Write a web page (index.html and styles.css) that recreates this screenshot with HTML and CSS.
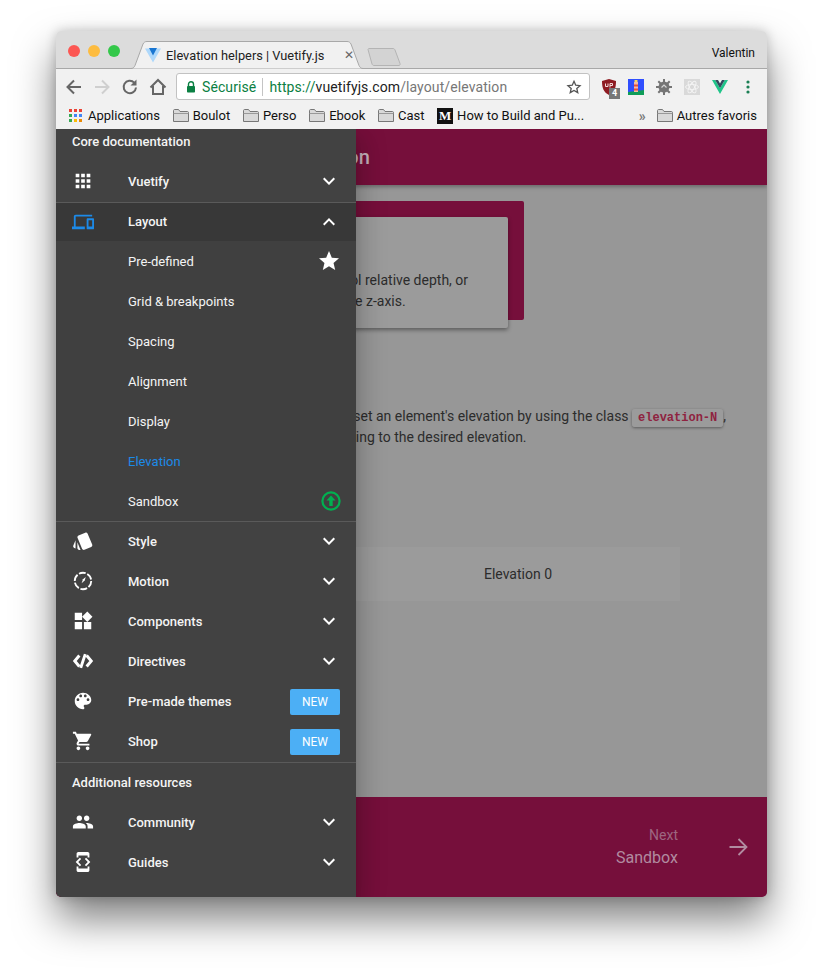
FILE: index.html
```html
<!DOCTYPE html>
<html lang="en">
<head>
  <meta charset="UTF-8">
  <title>Elevation helpers | Vuetify.js</title>
  <link rel="stylesheet" href="styles.css">
</head>
<body>
  <div class="window">
    <!-- browser chrome -->
    <div class="titlebar">
      <div class="lights">
        <span class="light red"></span>
        <span class="light yellow"></span>
        <span class="light green"></span>
      </div>
      <div class="tab">
        <svg class="tab-shape" width="238" height="28" viewBox="0 0 238 28"><path d="M0.5 27.5H3C5 27.5 6 26.5 7 24.500L15 3C16 1.300 17 0.500 19 0.500H219C221 0.500 222 1.300 223 3L231 24.500C232 26.500 233 27.500 235 27.500H238" fill="#f1f1f1" stroke="#a8a8a8"/></svg>
        <svg class="tab-logo" width="16" height="16" viewBox="0 0 16 16"><path d="M0 1.500H6L8 6 10 1.500H16L8 15.500Z" fill="#aed8fb"/><path d="M4 1H12L8 8.500Z" fill="#1976d2"/></svg>
        <span class="tab-title">Elevation helpers | Vuetify.js</span>
        <span class="tab-close">✕</span>
      </div>
      <svg class="new-tab" width="34" height="18" viewBox="0 0 34 18"><path d="M1 1.500C1 1 1.500 .5 2 .5H26C27 .5 27.500 1 28 2L33 15.500C33.300 16.500 33 17.500 32 17.500H7C6 17.500 5.500 17 5 16Z" fill="#d3d3d3" stroke="#b4b4b4"/></svg>
      <span class="profile">Valentin</span>
    </div>

    <div class="toolbar">
      <svg class="nav-icon" width="20" height="20" viewBox="0 0 20 20"><path d="M17 10H4M10 3.500L3.500 10 10 16.500" fill="none" stroke="#666" stroke-width="2"/></svg>
      <svg class="nav-icon" width="20" height="20" viewBox="0 0 20 20"><path d="M3 10H16M10 3.500L16.500 10 10 16.500" fill="none" stroke="#cfcfcf" stroke-width="2"/></svg>
      <svg class="nav-icon" width="20" height="20" viewBox="0 0 20 20"><path d="M16 10.500A6.200 6.200 0 1 1 14.200 5.600" fill="none" stroke="#666" stroke-width="2"/><path d="M16.500 2.500V8.500H10.500Z" fill="#666"/></svg>
      <svg class="nav-icon" width="20" height="20" viewBox="0 0 20 20"><path d="M2.500 10.500L10 3 17.500 10.500M5 9V17H15V9" fill="none" stroke="#666" stroke-width="2"/></svg>
      <div class="omnibox">
        <svg class="lock" width="10" height="12" viewBox="0 0 10 12"><path d="M2.500 5V3.200a2.500 2.500 0 0 1 5 0V5" fill="none" stroke="#0b8043" stroke-width="1.400"/><rect x="1" y="5" width="8" height="6.500" rx=".8" fill="#0b8043"/></svg>
        <span class="secure">Sécurisé</span>
        <span class="url"><span class="scheme">https://</span><span class="host">vuetifyjs.com</span><span class="path">/layout/elevation</span></span>
        <svg class="omni-star" width="16" height="16" viewBox="0 0 24 24"><path d="M12 3.500l2.600 5.800 6.400.7-4.800 4.200 1.400 6.300-5.600-3.200-5.600 3.200 1.400-6.300L3 10l6.400-.7z" fill="none" stroke="#555" stroke-width="2"/></svg>
      </div>
      <div class="extensions">
        <div class="ext ublock">
          <svg width="16" height="16" viewBox="0 0 16 16"><path d="M8 0L15 2C15 8 14 13 8 16 2 13 1 8 1 2Z" fill="#8e1b22"/><path d="M4.500 4.500V7.500H7V4.500M9 8.500V4.500H11.500V6.500H9" fill="none" stroke="#f3dcdc"/></svg>
          <span class="ext-count">4</span>
        </div>
        <svg class="ext" width="16" height="16" viewBox="0 0 16 16"><rect width="16" height="16" fill="#304ffe"/><path d="M0 13L16 11V16H0Z" fill="#0f9d58"/><rect x="6" y="3" width="4" height="10" fill="#f4b9a7"/><rect x="6" y="5.500" width="4" height="2" fill="#e8503a"/><rect x="6" y="9.500" width="4" height="2" fill="#e8503a"/><rect x="6.500" y="1" width="3" height="2" fill="#f9d65c"/></svg>
        <svg class="ext" width="16" height="16" viewBox="0 0 16 16"><circle cx="8" cy="8" r="5.500" fill="#757575"/><path d="M8 0V16M0 8H16M2.300 2.300L13.700 13.700M13.700 2.300L2.300 13.700" stroke="#757575" stroke-width="2"/><path d="M5.500 8.500L8 6 10.500 8.500" fill="none" stroke="#d5d5d5" stroke-width="1.200"/></svg>
        <svg class="ext" width="16" height="16" viewBox="0 0 16 16"><rect width="16" height="16" fill="#d9d9d9"/><g fill="none" stroke="#f4f4f4" stroke-width=".9"><ellipse cx="8" cy="8" rx="6.500" ry="2.500"/><ellipse cx="8" cy="8" rx="6.500" ry="2.500" transform="rotate(60 8 8)"/><ellipse cx="8" cy="8" rx="6.500" ry="2.500" transform="rotate(120 8 8)"/></g></svg>
        <svg class="ext" width="16" height="14" viewBox="0 0 16 14"><path d="M0 0H3.200L8 8.200 12.800 0H16L8 14Z" fill="#20c489"/><path d="M3.200 0H6L8 3.500 10 0H12.800L8 8.200Z" fill="#34495e"/></svg>
        <svg class="ext menu-dots" width="4" height="14" viewBox="0 0 4 14"><circle cx="2" cy="2" r="1.600" fill="#1b7f55"/><circle cx="2" cy="7" r="1.600" fill="#1b7f55"/><circle cx="2" cy="12" r="1.600" fill="#1b7f55"/></svg>
      </div>
    </div>

    <div class="bookmarks">
      <span class="bookmark">
        <svg class="apps-dots" width="13" height="13" viewBox="0 0 13 13"><g><rect width="3" height="3" fill="#ea4335"/><rect x="5" width="3" height="3" fill="#ea4335"/><rect x="10" width="3" height="3" fill="#ea4335"/><rect y="5" width="3" height="3" fill="#34a853"/><rect x="5" y="5" width="3" height="3" fill="#4285f4"/><rect x="10" y="5" width="3" height="3" fill="#4285f4"/><rect y="10" width="3" height="3" fill="#34a853"/><rect x="5" y="10" width="3" height="3" fill="#fbbc05"/><rect x="10" y="10" width="3" height="3" fill="#ea8a05"/></g></svg>
        Applications
      </span>
      <span class="bookmark"><svg class="folder" width="16" height="13" viewBox="0 0 16 13"><path d="M.5 12.500V1.500C.5 1 1 .5 1.500 .5H5.500L7 2.500H14.500C15 2.500 15.500 3 15.500 3.500V12.500Z" fill="#d9d9d9" stroke="#777"/><path d="M.5 4.500H15.500" stroke="#999"/></svg>Boulot</span>
      <span class="bookmark"><svg class="folder" width="16" height="13" viewBox="0 0 16 13"><path d="M.5 12.500V1.500C.5 1 1 .5 1.500 .5H5.500L7 2.500H14.500C15 2.500 15.500 3 15.500 3.500V12.500Z" fill="#d9d9d9" stroke="#777"/><path d="M.5 4.500H15.500" stroke="#999"/></svg>Perso</span>
      <span class="bookmark"><svg class="folder" width="16" height="13" viewBox="0 0 16 13"><path d="M.5 12.500V1.500C.5 1 1 .5 1.500 .5H5.500L7 2.500H14.500C15 2.500 15.500 3 15.500 3.500V12.500Z" fill="#d9d9d9" stroke="#777"/><path d="M.5 4.500H15.500" stroke="#999"/></svg>Ebook</span>
      <span class="bookmark"><svg class="folder" width="16" height="13" viewBox="0 0 16 13"><path d="M.5 12.500V1.500C.5 1 1 .5 1.500 .5H5.500L7 2.500H14.500C15 2.500 15.500 3 15.500 3.500V12.500Z" fill="#d9d9d9" stroke="#777"/><path d="M.5 4.500H15.500" stroke="#999"/></svg>Cast</span>
      <span class="bookmark"><span class="medium-logo">M</span>How to Build and Pu...</span>
      <span class="bookmark-more">»</span>
      <span class="bookmark"><svg class="folder" width="16" height="13" viewBox="0 0 16 13"><path d="M.5 12.500V1.500C.5 1 1 .5 1.500 .5H5.500L7 2.500H14.500C15 2.500 15.500 3 15.500 3.500V12.500Z" fill="#d9d9d9" stroke="#777"/><path d="M.5 4.500H15.500" stroke="#999"/></svg>Autres favoris</span>
    </div>

    <!-- page -->
    <div class="page">
      <header class="page-bar">Elevation</header>

      <main class="content">
        <div class="hero">
          <div class="hero-card">
            <p class="hero-line first">to control relative depth, or</p>
            <p class="hero-line second">surfaces along the z-axis.</p>
          </div>
        </div>
        <p class="usage-line first">You can set an element's elevation by using the class <code class="chip">elevation-N</code>,</p>
        <p class="usage-line second">corresponding to the desired elevation.</p>
        <div class="elevation-box">Elevation 0</div>
      </main>

      <footer class="page-foot">
        <div class="next">
          <span class="next-label">Next</span>
          <span class="next-title">Sandbox</span>
        </div>
        <svg class="next-arrow" width="24" height="24" viewBox="0 0 24 24"><path d="M3.500 12H20M12.500 4L20.500 12 12.500 20" fill="none" stroke="#b18ba0" stroke-width="1.800"/></svg>
      </footer>

      <!-- navigation drawer sits over the page -->
      <nav class="drawer">
        <div class="drawer-head first">Core documentation</div>

        <div class="row">
          <svg class="row-icon" viewBox="0 0 24 24"><path d="M4 8h4V4H4v4zm6 12h4v-4h-4v4zm-6 0h4v-4H4v4zm0-6h4v-4H4v4zm6 0h4v-4h-4v4zm6-10v4h4V4h-4zm-6 4h4V4h-4v4zm6 6h4v-4h-4v4zm0 6h4v-4h-4v4z"/></svg>
          <span class="row-label">Vuetify</span>
          <svg class="row-end" viewBox="0 0 24 24"><path d="M16.590 8.590L12 13.170 7.410 8.590 6 10l6 6 6-6z"/></svg>
        </div>

        <div class="group">
          <div class="row group-head">
            <svg class="row-icon blue" viewBox="0 0 24 24"><path d="M4 6h18V4H4c-1.100 0-2 .9-2 2v11H0v3h14v-3H4V6zm19 2h-6c-.55 0-1 .45-1 1v10c0 .55.45 1 1 1h6c.55 0 1-.45 1-1V9c0-.55-.45-1-1-1zm-1 9h-4v-7h4v7z"/></svg>
            <span class="row-label">Layout</span>
            <svg class="row-end" viewBox="0 0 24 24"><path d="M12 8l-6 6 1.410 1.410L12 10.830l4.590 4.580L18 14z"/></svg>
          </div>
          <div class="row sub">
            <span class="row-label">Pre-defined</span>
            <svg class="row-end" viewBox="0 0 24 24"><path d="M12 17.270L18.180 21l-1.640-7.030L22 9.240l-7.190-.61L12 2 9.190 8.630 2 9.240l5.460 4.730L5.820 21z"/></svg>
          </div>
          <div class="row sub"><span class="row-label">Grid &amp; breakpoints</span></div>
          <div class="row sub"><span class="row-label">Spacing</span></div>
          <div class="row sub"><span class="row-label">Alignment</span></div>
          <div class="row sub"><span class="row-label">Display</span></div>
          <div class="row sub active"><span class="row-label">Elevation</span></div>
          <div class="row sub">
            <span class="row-label">Sandbox</span>
            <svg class="row-end upgrade" viewBox="0 0 24 24"><circle cx="12" cy="12" r="8.600" fill="none" stroke="#00b050" stroke-width="2.200"/><path d="M12 6.500l-4.500 5h2.800V17h3.400v-5.500h2.800z" fill="#00b050"/></svg>
          </div>
        </div>

        <div class="row">
          <svg class="row-icon" viewBox="0 0 24 24"><path d="M2.530 19.650l1.340.56v-9.030l-2.430 5.860c-.41 1.020.08 2.190 1.090 2.610zm19.500-3.700L17.070 3.980c-.31-.75-1.040-1.210-1.810-1.230-.26 0-.53.04-.79.15L7.100 5.950c-.75.31-1.210 1.030-1.230 1.800-.01.27.04.54.15.8l4.960 11.970c.31.76 1.050 1.220 1.830 1.230.26 0 .52-.05.77-.15l7.360-3.050c1.020-.42 1.510-1.590 1.090-2.600zM5.880 19.750c0 1.100.9 2 2 2h1.450l-3.450-8.340v6.340z"/></svg>
          <span class="row-label">Style</span>
          <svg class="row-end" viewBox="0 0 24 24"><path d="M16.590 8.590L12 13.170 7.410 8.590 6 10l6 6 6-6z"/></svg>
        </div>
        <div class="row">
          <svg class="row-icon" viewBox="0 0 24 24"><circle cx="12" cy="12" r="9" fill="none" stroke="#fff" stroke-width="2" stroke-dasharray="7.500 1.900"/><path d="M10.500 14.500L12 10l3-2.500-1.200 4z" fill="#fff"/></svg>
          <span class="row-label">Motion</span>
          <svg class="row-end" viewBox="0 0 24 24"><path d="M16.590 8.590L12 13.170 7.410 8.590 6 10l6 6 6-6z"/></svg>
        </div>
        <div class="row">
          <svg class="row-icon" viewBox="0 0 24 24"><path d="M13 13v8h8v-8h-8zM3 21h8v-8H3v8zM3 3v8h8V3H3zm13.660-1.310L11 7.340 16.660 13l5.660-5.660-5.660-5.650z"/></svg>
          <span class="row-label">Components</span>
          <svg class="row-end" viewBox="0 0 24 24"><path d="M16.590 8.590L12 13.170 7.410 8.590 6 10l6 6 6-6z"/></svg>
        </div>
        <div class="row">
          <svg class="row-icon" viewBox="0 0 24 24"><path d="M8 6L3 12l5 6M16 6l5 6-5 6M14.500 4.500L9.500 19.500" fill="none" stroke="#fff" stroke-width="3.200"/></svg>
          <span class="row-label">Directives</span>
          <svg class="row-end" viewBox="0 0 24 24"><path d="M16.590 8.590L12 13.170 7.410 8.590 6 10l6 6 6-6z"/></svg>
        </div>
        <div class="row">
          <svg class="row-icon" viewBox="0 0 24 24"><path d="M12 3c-4.970 0-9 4.030-9 9s4.030 9 9 9c.83 0 1.500-.67 1.500-1.500 0-.39-.15-.74-.39-1.010-.23-.26-.38-.61-.38-.99 0-.83.67-1.500 1.500-1.500H16c2.760 0 5-2.240 5-5 0-4.420-4.030-8-9-8zm-5.500 9c-.83 0-1.500-.67-1.500-1.500S5.670 9 6.500 9 8 9.670 8 10.500 7.330 12 6.500 12zm3-4C8.670 8 8 7.330 8 6.500S8.670 5 9.500 5s1.500.67 1.500 1.500S10.330 8 9.500 8zm5 0c-.83 0-1.500-.67-1.500-1.500S13.670 5 14.500 5s1.500.67 1.500 1.500S15.330 8 14.500 8zm3 4c-.83 0-1.500-.67-1.500-1.500S16.670 9 17.500 9s1.500.67 1.500 1.500-.67 1.500-1.500 1.500z"/></svg>
          <span class="row-label">Pre-made themes</span>
          <span class="badge">NEW</span>
        </div>
        <div class="row">
          <svg class="row-icon" viewBox="0 0 24 24"><path d="M7 18c-1.100 0-1.990.9-1.990 2S5.900 22 7 22s2-.9 2-2-.9-2-2-2zM1 2v2h2l3.600 7.590-1.350 2.450c-.16.28-.25.61-.25.96 0 1.100.9 2 2 2h12v-2H7.420c-.14 0-.25-.11-.25-.25l.03-.12.9-1.630h7.450c.75 0 1.410-.41 1.750-1.030l3.580-6.490c.08-.14.12-.31.12-.48 0-.55-.45-1-1-1H5.210l-.94-2H1zm16 16c-1.100 0-1.990.9-1.990 2s.89 2 1.990 2 2-.9 2-2-.9-2-2-2z"/></svg>
          <span class="row-label">Shop</span>
          <span class="badge">NEW</span>
        </div>

        <div class="drawer-head">Additional resources</div>

        <div class="row">
          <svg class="row-icon" viewBox="0 0 24 24"><path d="M16 11c1.660 0 2.990-1.340 2.990-3S17.660 5 16 5c-1.660 0-3 1.340-3 3s1.340 3 3 3zm-8 0c1.660 0 2.990-1.340 2.990-3S9.660 5 8 5C6.340 5 5 6.340 5 8s1.340 3 3 3zm0 2c-2.330 0-7 1.170-7 3.500V19h14v-2.500c0-2.330-4.670-3.500-7-3.500zm8 0c-.29 0-.62.02-.97.05 1.160.84 1.970 1.970 1.970 3.450V19h6v-2.500c0-2.330-4.670-3.500-7-3.500z"/></svg>
          <span class="row-label">Community</span>
          <svg class="row-end" viewBox="0 0 24 24"><path d="M16.590 8.590L12 13.170 7.410 8.590 6 10l6 6 6-6z"/></svg>
        </div>
        <div class="row">
          <svg class="row-icon" viewBox="0 0 24 24"><path d="M7 5h10v2h2V3c0-1.100-.9-1.990-2-1.990L7 1c-1.100 0-2 .9-2 2v4h2V5zm8.410 11.590L20 12l-4.590-4.590L14 8.830 17.170 12 14 15.170l1.410 1.420zM10 15.170L6.830 12 10 8.830 8.590 7.410 4 12l4.590 4.590L10 15.170zM17 19H7v-2H5v4c0 1.100.9 2 2 2h10c1.100 0 2-.9 2-2v-4h-2v2z"/></svg>
          <span class="row-label">Guides</span>
          <svg class="row-end" viewBox="0 0 24 24"><path d="M16.590 8.590L12 13.170 7.410 8.590 6 10l6 6 6-6z"/></svg>
        </div>
      </nav>
    </div>
  </div>
</body>
</html>
```

FILE: styles.css
```css
html, body {
  margin: 0;
  padding: 0;
  background-color: #fff;
}

body {
  padding: 31px 55px 80px 56px;
  font-family: Roboto, "Liberation Sans", sans-serif;
  overflow: hidden;
}

p {
  margin: 0;
}

.window {
  display: flex;
  flex-direction: column;
  height: 866px;
  border-radius: 5px;
  box-shadow: 0 22px 40px rgba(0, 0, 0, 0.5), 0 0 12px rgba(0, 0, 0, 0.2);
  background-color: #f1f1f1;
}

/* browser chrome */
.titlebar {
  display: flex;
  align-items: flex-end;
  flex: none;
  height: 37px;
  padding-left: 12px;
  border-bottom: 1px solid #a8a8a8;
  border-radius: 5px 5px 0 0;
  background-color: #dcdcdc;
}

.lights {
  display: flex;
  gap: 8px;
  align-self: flex-start;
  margin-top: 14px;
}

.light {
  width: 12px;
  height: 12px;
  border-radius: 50%;
}

.light.red { background-color: #fc5753; }
.light.yellow { background-color: #fdbc40; }
.light.green { background-color: #34c84a; }

.tab {
  position: relative;
  display: flex;
  align-items: center;
  width: 238px;
  height: 28px;
  margin-left: 8px;
  margin-bottom: -1px;
  font-size: 12.800px;
  color: #222;
}

.tab-shape {
  position: absolute;
  left: 0;
  top: 0;
}

.tab-logo {
  position: relative;
  margin-left: 17px;
}

.tab-title {
  position: relative;
  margin-left: 5px;
  white-space: nowrap;
}

.tab-close {
  position: relative;
  margin-left: 20px;
  font-size: 12px;
  color: #666;
}

.new-tab {
  margin-left: 1px;
  margin-bottom: 2px;
}

.profile {
  margin-left: auto;
  align-self: flex-start;
  margin-top: 15px;
  margin-right: 12px;
  font-size: 12px;
  color: #111;
}

.toolbar {
  display: flex;
  align-items: center;
  flex: none;
  box-sizing: border-box;
  height: 33px;
  padding: 2px 0 0 8px;
}

.nav-icon {
  flex: none;
  margin-right: 8px;
}

.omnibox {
  display: flex;
  align-items: center;
  flex: none;
  box-sizing: border-box;
  width: 414px;
  height: 27px;
  padding: 0 7px 0 9px;
  border: 1px solid #c2c2c2;
  border-radius: 3px;
  background-color: #fff;
  font-size: 14px;
}

.secure {
  margin-left: 6px;
  padding-right: 6px;
  border-right: 1px solid #c4c4c4;
  color: #0b8043;
  letter-spacing: 0.1px;
  line-height: 18px;
}

.url {
  margin-left: 6px;
  letter-spacing: 0.1px;
  white-space: nowrap;
}

.scheme { color: #0b8043; }
.host { color: #222; }
.path { color: #777; }

.omni-star {
  margin-left: auto;
}

.extensions {
  display: flex;
  align-items: center;
  gap: 12px;
  margin-left: 11px;
}

.ext {
  flex: none;
}

.menu-dots {
  margin-left: 6px;
}

.ublock {
  position: relative;
  display: flex;
  width: 16px;
  height: 16px;
  margin-right: -1px;
}

.ext-count {
  position: absolute;
  right: -3px;
  bottom: -4px;
  width: 11px;
  height: 11px;
  background-color: #777;
  color: #fff;
  font-size: 9px;
  font-weight: 700;
  line-height: 11px;
  text-align: center;
}

.bookmarks {
  display: flex;
  align-items: center;
  flex: none;
  height: 27px;
  padding-left: 13px;
  font-size: 13px;
  color: #111;
}

.bookmark {
  display: flex;
  align-items: center;
  gap: 4px;
  margin-right: 12.700px;
  white-space: nowrap;
}

.bookmark:last-child {
  margin-right: 10px;
}

.apps-dots {
  margin-right: 2px;
}

.medium-logo {
  width: 16px;
  height: 16px;
  background-color: #111;
  color: #fff;
  font-family: "Liberation Serif", serif;
  font-size: 13px;
  font-weight: 700;
  line-height: 16px;
  text-align: center;
}

.bookmark-more {
  margin-left: auto;
  margin-right: 11px;
  color: #777;
  font-size: 14px;
  font-weight: 700;
}

/* page under the drawer */
.page {
  position: relative;
  display: flex;
  flex-direction: column;
  flex: 1;
  min-height: 0;
  overflow: hidden;
  border-radius: 0 0 5px 5px;
  background-color: #979797;
}

.page-bar {
  flex: none;
  box-sizing: border-box;
  height: 56px;
  padding-left: 232px;
  background-color: #760f3b;
  box-shadow: 0 2px 4px rgba(0, 0, 0, 0.3);
  color: #c4b0ba;
  font-size: 20px;
  font-weight: 500;
  line-height: 56px;
}

.content {
  flex: 1;
  padding-top: 16px;
  color: #2c2c2c;
  font-size: 14px;
  line-height: 21px;
}

.hero {
  box-sizing: border-box;
  width: 468px;
  height: 119px;
  padding: 16px 16px 0 0;
  border-radius: 2px;
  background-color: #760f3b;
}

.hero-card {
  box-sizing: border-box;
  width: 452px;
  height: 111px;
  padding-top: 53px;
  border-radius: 2px;
  background-color: #9b9b9b;
  box-shadow: 0 2px 4px rgba(0, 0, 0, 0.4);
}

.hero-line {
  white-space: nowrap;
}

.hero-line.first {
  margin-left: 246px;
}

.hero-line.second {
  margin-left: 191px;
}

.usage-line {
  height: 21px;
  white-space: nowrap;
}

.usage-line.first {
  margin-top: 86px;
  margin-left: 244px;
}

.usage-line.second {
  margin-left: 229px;
}

.chip {
  padding: 2px 6px;
  border-radius: 3px;
  background-color: #9b9b9b;
  box-shadow: 0 1px 3px rgba(0, 0, 0, 0.4);
  color: #8f2340;
  font-family: "Liberation Mono", monospace;
  font-size: 12px;
  font-weight: 700;
}

.elevation-box {
  width: 324px;
  height: 54px;
  margin-top: 99px;
  margin-left: 300px;
  background-color: #9b9b9b;
  line-height: 54px;
  text-align: center;
}

.page-foot {
  display: flex;
  align-items: center;
  justify-content: flex-end;
  flex: none;
  height: 100px;
  padding-right: 17px;
  background-color: #760f3b;
}

.next {
  display: flex;
  flex-direction: column;
  align-items: flex-end;
  margin-right: 48px;
}

.next-label {
  color: #9d6781;
  font-size: 14px;
  line-height: 22px;
}

.next-title {
  color: #b18ba0;
  font-size: 16px;
  line-height: 24px;
}

/* drawer */
.drawer {
  position: absolute;
  left: 0;
  top: 0;
  bottom: 0;
  width: 300px;
  background-color: #424242;
  box-shadow: 0 8px 10px -5px rgba(0, 0, 0, 0.2), 0 16px 24px 2px rgba(0, 0, 0, 0.14), 0 6px 30px 5px rgba(0, 0, 0, 0.12);
  border-radius: 0 0 0 5px;
  color: #f4f4f4;
  font-size: 13px;
  font-weight: 500;
}

.drawer-head {
  height: 39px;
  margin-top: 1px;
  padding-left: 16px;
  border-top: 1px solid #5a5a5a;
  line-height: 40px;
}

.drawer-head.first {
  height: 32px;
  margin-top: 0;
  border-top: 0;
  line-height: 25px;
}

.row {
  display: flex;
  align-items: center;
  height: 40px;
  padding: 0 15px 0 16px;
}

.row-icon {
  flex: none;
  width: 22px;
  height: 22px;
  margin-right: 34px;
  fill: #fff;
}

.row-icon.blue {
  fill: #1c8ae8;
}

.row-end {
  flex: none;
  width: 24px;
  height: 24px;
  margin-left: auto;
  fill: #fff;
}

.row-end.upgrade {
  margin-right: -2px;
}

.group {
  margin: 1px 0 -1px;
  border-top: 1px solid #5a5a5a;
  border-bottom: 1px solid #5a5a5a;
  background-color: #404040;
}

.group-head {
  height: 37px;
  padding-bottom: 1px;
  background-color: #383838;
}

.sub {
  padding-left: 72px;
  font-weight: 400;
}

.sub.active {
  color: #1c8ae8;
}

.badge {
  width: 50px;
  height: 26px;
  margin-top: 1px;
  margin-left: auto;
  margin-right: 1px;
  border-radius: 2px;
  background-color: #4caff5;
  color: #fff;
  font-size: 12px;
  font-weight: 400;
  line-height: 26px;
  text-align: center;
}
```
